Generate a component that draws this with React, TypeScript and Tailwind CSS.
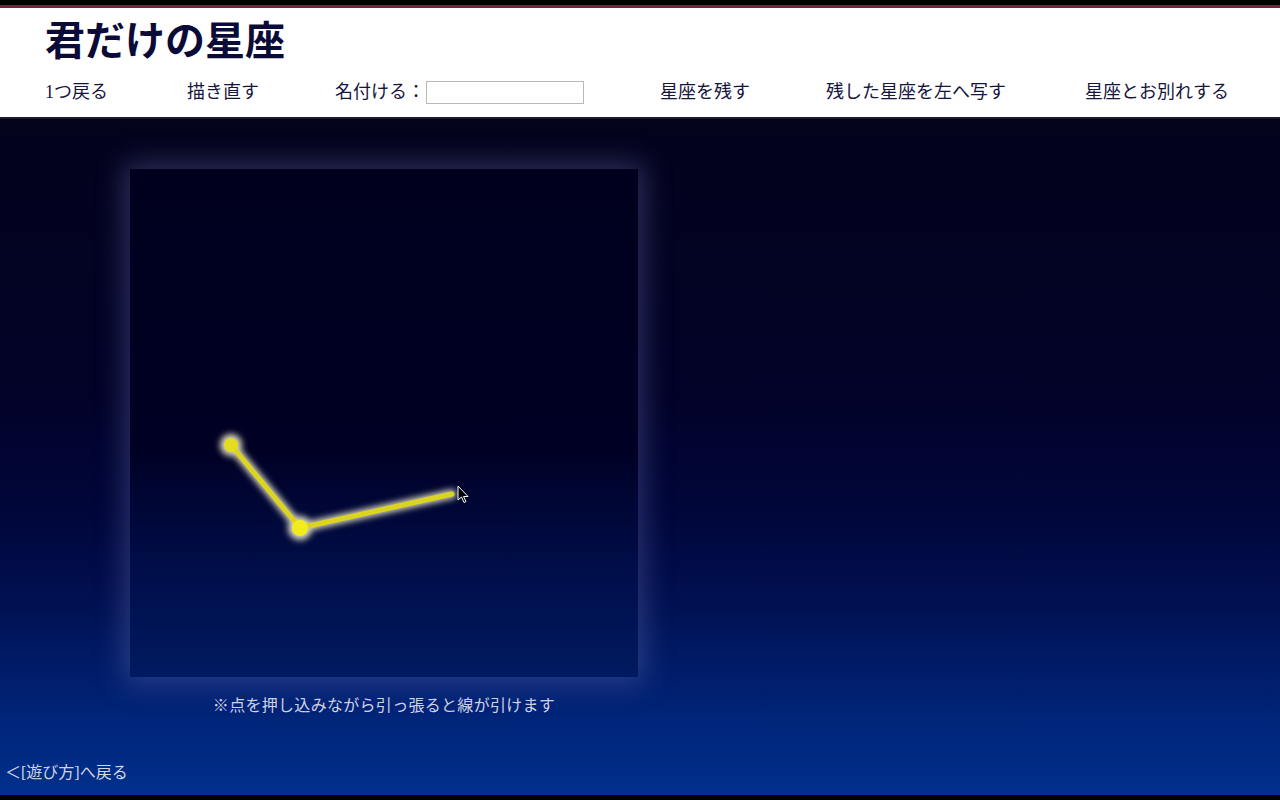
import React from "react";

const serif = { fontFamily: '"Liberation Serif", "Noto Sans CJK JP", serif' };

export default function App() {
  return (
    <div className="w-[1280px] h-[800px] flex flex-col bg-black overflow-hidden" style={serif}>
      <div className="h-[5px] bg-black" />
      <div className="h-[3px] bg-[#7b1f3e]" />
      <header className="h-[109px] bg-white flex flex-col">
        <h1 className="pl-[45px] pt-[11px] text-[40px] leading-[46px] font-semibold text-[#0b0b38]">君だけの星座</h1>
        <nav className="flex items-center mt-[15px] h-[24px] text-[18px] text-[#15153d] whitespace-nowrap">
          <span className="ml-[45px]">1つ戻る</span>
          <span className="ml-[79px]">描き直す</span>
          <span className="ml-[76px] flex items-center">
            名付ける：
            <span className="ml-[1px] w-[158px] h-[23px] border border-[#b8b8b8] bg-white" />
          </span>
          <span className="ml-[76px]">星座を残す</span>
          <span className="ml-[76px]">残した星座を左へ写す</span>
          <span className="ml-[79px]">星座とお別れする</span>
        </nav>
      </header>
      <div className="h-[2px] bg-[#1c1c2a]" />
      <main className="flex-1 flex flex-col bg-[linear-gradient(to_bottom,#03031c_0%,#020228_40%,#01063a_58%,#001050_71%,#002478_88%,#00308c_100%)]">
        <div className="pl-[130px] pt-[50px]">
          <div className="relative w-[508px] h-[508px] bg-[linear-gradient(to_bottom,#00001e_0%,#000024_55%,#000d48_78%,#001a60_100%)] shadow-[0_0_26px_6px_rgba(120,130,200,0.35)]">
            <svg width="508" height="508" className="absolute inset-0">
              <defs>
                <filter id="halo" x="-50%" y="-50%" width="200%" height="200%">
                  <feGaussianBlur stdDeviation="3" />
                </filter>
              </defs>
              <g filter="url(#halo)" opacity="0.9">
                <line x1="101" y1="276" x2="170" y2="359" stroke="#f6f2d0" strokeWidth="9" strokeLinecap="round" />
                <line x1="170" y1="359" x2="322" y2="325" stroke="#f6f2d0" strokeWidth="9" strokeLinecap="round" />
                <circle cx="101" cy="276" r="11" fill="#f6f2d0" />
                <circle cx="170" cy="359" r="12" fill="#f6f2d0" />
              </g>
              <line x1="101" y1="276" x2="170" y2="359" stroke="#dcd520" strokeWidth="5" strokeLinecap="round" />
              <line x1="170" y1="359" x2="322" y2="325" stroke="#dcd520" strokeWidth="5" strokeLinecap="round" />
              <circle cx="101" cy="276" r="7" fill="#e4dc1e" />
              <circle cx="170" cy="359" r="8" fill="#f2ec1c" />
              <path d="M328 317 L328 331 L331.5 328 L334 333.5 L336 332.5 L333.5 327.5 L338 327.5 Z" fill="#000" stroke="#fff" strokeWidth="1" strokeLinejoin="round" />
            </svg>
          </div>
        </div>
        <p className="w-[508px] ml-[130px] mt-[18px] text-center text-[16px] tracking-[0.3px] leading-[22px] text-[#d2d4e4]">※点を押し込みながら引っ張ると線が引けます</p>
        <a className="mt-auto mb-[11px] pl-[5px] text-[16px] leading-[22px] text-[#d2d4e4]">＜[遊び方]へ戻る</a>
      </main>
      <div className="h-[5px] bg-black" />
    </div>
  );
}
